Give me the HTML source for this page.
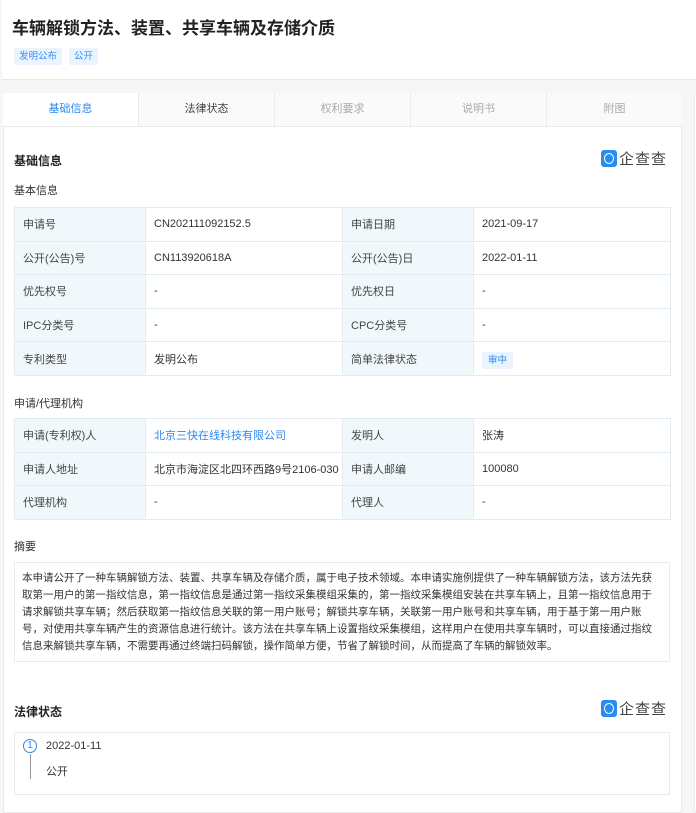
<!DOCTYPE html>
<html><head><meta charset="utf-8"><style>
*{margin:0;padding:0;box-sizing:border-box}
body{width:696px;height:802px;background:#f5f6f8;font-family:"Liberation Sans","Noto Sans CJK SC",sans-serif;color:#333;position:relative;overflow:hidden;font-size:11px}
.a{position:absolute}
.hdr{left:2px;top:0;width:694px;height:80px;background:#fff;border-bottom:1px solid #e8e8e8}
.title{left:12px;top:14px;font-size:17px;font-weight:bold;color:#222;white-space:nowrap}
.tag{top:48px;height:17px;line-height:17px;padding:0 5px;background:#e9f4ff;color:#3b8cf0;font-size:9.5px;border-radius:2px}
.card{left:3px;top:93px;width:679px;height:720px;background:#fff;border:1px solid #e8eaee}
.side{left:694px;top:93px;width:10px;height:720px;background:#fff;border:1px solid #e8eaee}
.tabs{left:3px;top:93px;width:679px;height:34px;display:flex;border-bottom:1px solid #e8eaee}
.tabs div{flex:1;text-align:center;line-height:33px;font-size:11px;background:#fafafa;border-right:1px solid #e8eaee;color:#aaa}
.tabs div:first-child{background:#fff;color:#2f87f0}
.tabs div:nth-child(2){color:#444}
.tabs div:last-child{border-right:none}
.h{font-size:12px;font-weight:bold;color:#222}
.s{font-size:11px;color:#333}
table{position:absolute;left:14px;width:656px;border-collapse:collapse;table-layout:fixed}
td{border:1px solid #e3ebf3;height:33.6px;padding:0 8px;font-size:11px;color:#333;white-space:nowrap;overflow:hidden}
td.l{background:#f1f8fc;color:#444}
.lg{display:flex;align-items:center}
.lg i{display:block;width:16px;height:17px;background:#2a8cf0;border-radius:3px;position:relative}
.lg i:after{content:"";position:absolute;left:3px;top:3px;width:8px;height:9px;border:1.5px solid #fff;border-radius:50%}
.lg span{font-size:15px;color:#444;margin-left:2px;letter-spacing:1px}
.box{left:14px;width:656px;border:1px solid #e3ebf3;background:#fff}
</style></head><body>
<div class="a hdr"></div>
<div class="a title">车辆解锁方法、装置、共享车辆及存储介质</div>
<div class="a tag" style="left:14px">发明公布</div>
<div class="a tag" style="left:69px">公开</div>
<div class="a card"></div>
<div class="a side"></div>
<div class="a tabs"><div>基础信息</div><div>法律状态</div><div>权利要求</div><div>说明书</div><div>附图</div></div>
<div class="a h" style="left:14px;top:152px">基础信息</div>
<div class="a lg" style="left:601px;top:148px"><i></i><span>企查查</span></div>
<div class="a s" style="left:14px;top:182px">基本信息</div>
<table style="top:207px">
<colgroup><col style="width:131px"><col style="width:197px"><col style="width:131px"><col style="width:197px"></colgroup>
<tr><td class="l">申请号</td><td>CN202111092152.5</td><td class="l">申请日期</td><td>2021-09-17</td></tr>
<tr><td class="l">公开(公告)号</td><td>CN113920618A</td><td class="l">公开(公告)日</td><td>2022-01-11</td></tr>
<tr><td class="l">优先权号</td><td>-</td><td class="l">优先权日</td><td>-</td></tr>
<tr><td class="l">IPC分类号</td><td>-</td><td class="l">CPC分类号</td><td>-</td></tr>
<tr><td class="l">专利类型</td><td>发明公布</td><td class="l">简单法律状态</td><td><span style="background:#e9f4ff;color:#2f87f0;font-size:9.5px;padding:3px 6px;border-radius:2px">审中</span></td></tr>
</table>
<div class="a s" style="left:14px;top:395px">申请/代理机构</div>
<table style="top:418px">
<colgroup><col style="width:131px"><col style="width:197px"><col style="width:131px"><col style="width:197px"></colgroup>
<tr><td class="l">申请(专利权)人</td><td style="color:#2f87f0">北京三快在线科技有限公司</td><td class="l">发明人</td><td>张涛</td></tr>
<tr><td class="l">申请人地址</td><td style="padding-right:2px">北京市海淀区北四环西路9号2106-030</td><td class="l">申请人邮编</td><td>100080</td></tr>
<tr><td class="l">代理机构</td><td>-</td><td class="l">代理人</td><td>-</td></tr>
</table>
<div class="a s" style="left:14px;top:538px">摘要</div>
<div class="a box" style="top:562px;height:100px;padding:7px 7px;font-size:10.5px;line-height:17px;color:#333">本申请公开了一种车辆解锁方法、装置、共享车辆及存储介质，属于电子技术领域。本申请实施例提供了一种车辆解锁方法，该方法先获取第一用户的第一指纹信息，第一指纹信息是通过第一指纹采集模组采集的，第一指纹采集模组安装在共享车辆上，且第一指纹信息用于请求解锁共享车辆；然后获取第一指纹信息关联的第一用户账号；解锁共享车辆，关联第一用户账号和共享车辆，用于基于第一用户账号，对使用共享车辆产生的资源信息进行统计。该方法在共享车辆上设置指纹采集模组，这样用户在使用共享车辆时，可以直接通过指纹信息来解锁共享车辆，不需要再通过终端扫码解锁，操作简单方便，节省了解锁时间，从而提高了车辆的解锁效率。</div>
<div class="a h" style="left:14px;top:703px">法律状态</div>
<div class="a lg" style="left:601px;top:698px"><i></i><span>企查查</span></div>
<div class="a box" style="top:732px;height:63px"></div>
<div class="a" style="left:23px;top:739px;width:14px;height:14px;border:1px solid #2f87f0;border-radius:50%;font-size:10px;line-height:12px;text-align:center;color:#2f87f0">1</div>
<div class="a" style="left:30px;top:754px;width:1px;height:25px;background:#999"></div>
<div class="a s" style="left:46px;top:740px">2022-01-11</div>
<div class="a s" style="left:46px;top:763px">公开</div>
</body></html>
